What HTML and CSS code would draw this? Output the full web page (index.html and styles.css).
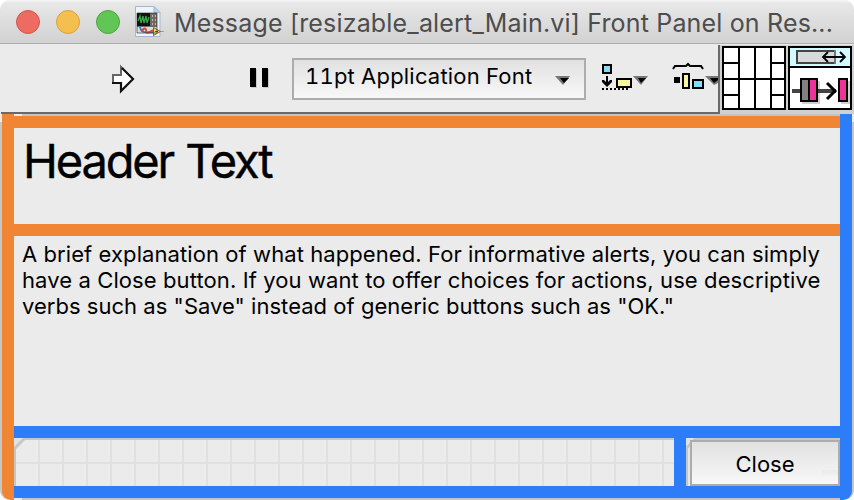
FILE: index.html
```html
<!DOCTYPE html>
<html lang="en">
<head>
<meta charset="utf-8">
<title>Message</title>
<link rel="stylesheet" href="styles.css">
</head>
<body>
<div class="window">
  <header class="titlebar">
    <span class="light red"></span><span class="light yellow"></span><span class="light green"></span>
    <svg class="doc" width="30" height="32" viewBox="0 0 30 32">
      <path d="M.5.5H19l6 6V30.500H.5z" fill="#edf4fc" stroke="#a3b7d0"/>
      <path d="M19 .5v6h6z" fill="#bed4ee" stroke="#a3b7d0"/>
      <path d="M2 7h20v20H2z" fill="#6f6a62"/>
      <path d="M2 7h13v13H2z" fill="#111"/>
      <path d="M3 15l2-5 1 7 2-7 1 7 2-7 1 7 2-6" fill="none" stroke="#37a849" stroke-width="1.300"/>
      <path d="M2 21h20v6H2z" fill="#d8dde2"/>
      <path d="M17 10h1m2 0h1m-4 4h1m2 0h1m-4 4h1m2 0h1" stroke="#ddd6c8" stroke-width="1.500"/>
      <path d="M5 20c0 7 6 7 14 6" fill="none" stroke="#2d7dbb" stroke-width="1.800"/>
      <path d="M7 26c1-5 5-4 4-1s5 1 7-1" fill="none" stroke="#d64735" stroke-width="1.800"/>
      <path d="M24 25.500h5" stroke="#c28f82"/>
      <path d="M18.500 21.500v8l7-4z" fill="#f8d65f" stroke="#81662e"/>
      <path d="M20 25.500h3" stroke="#675020"/>
      <path d="M2 7h20v20H2z" fill="none" stroke="#222" stroke-opacity=".6"/>
    </svg>
    <h1 class="title">Message [resizable_alert_Main.vi] Front Panel on Res...</h1>
  </header>
  <div class="toolbar">
    <svg class="run" width="28" height="32" viewBox="0 0 28 32">
      <path d="M3 12h8V3l12 13-12 13v-9H3z" fill="#fff"/>
      <path d="M3 20v-8h8V4l2 2" fill="none" stroke="#666" stroke-width="2"/>
      <path d="M12 5l11 11-12 12v-8H2" fill="none" stroke="#111" stroke-width="2.200"/>
    </svg>
    <svg class="pause" width="22" height="24" viewBox="0 0 22 24"><path d="M3 3h6v19H3zM15 3h6v19h-6z" fill="#ccc"/><path d="M2 2h6v19H2zM14 2h6v19h-6z"/></svg>
    <div class="font-select"><span>11pt Application Font</span>
      <svg width="16" height="10" viewBox="0 0 16 10"><path d="M0 0h15L8 9z" fill="#777"/><path d="M5 2h9L9 7z" fill="#000"/></svg>
    </div>
    <svg class="align" width="48" height="30" viewBox="0 0 48 30">
      <path d="M3 3h8v8H3z" fill="#82dcf6" stroke="#000" stroke-width="2"/>
      <path d="M17 17h14v8H17z" fill="#f7f5a2" stroke="#000" stroke-width="2"/>
      <path d="M7 14v8" stroke="#000" stroke-width="2"/><path d="M2 18h2l3 3 3-3h2v2l-5 5-5-5z"/>
      <path d="M2 27h28" stroke="#000" stroke-width="2" stroke-dasharray="2 2"/>
      <path d="M33 14h15l-7 9z" fill="#777"/><path d="M38 16h8l-5 5z"/>
    </svg>
    <svg class="distribute" width="46" height="30" viewBox="0 0 46 30">
      <path d="M1 7l2-3h11l2-2 2 2h11l2 3" fill="none" stroke="#000" stroke-width="2"/>
      <path d="M2 15h6v6H2z"/>
      <path d="M11 12h6v14h-6z" fill="#f7f5a2" stroke="#000" stroke-width="2"/>
      <path d="M21 18h10v8H21z" fill="#82dcf6" stroke="#000" stroke-width="2"/>
      <path d="M33 14h13v7l-4 2z" fill="#777"/><path d="M38 16h8v2l-4 3z"/>
    </svg>
    <div class="panes">
      <svg width="64" height="64" viewBox="0 0 64 64">
        <path d="M1 1h62v62H1z" fill="#fff" stroke="#000" stroke-width="2"/>
        <path d="M17 1v62M33 1v62M49 1v62M1 33h62M1 17h16M1 49h16M49 17h14M49 49h14" stroke="#000" stroke-width="2"/>
      </svg>
      <svg width="64" height="64" viewBox="0 0 64 64">
        <path d="M1 1h62v62H1z" fill="#fff"/><path d="M1 1h62v20H1z" fill="#d1fbff"/>
        <path d="M1 1h62v62H1zM1 21h62" fill="none" stroke="#000" stroke-width="2"/>
        <path d="M9 5h38v12H9z" fill="#d9d9d9" stroke="#444" stroke-width="2"/>
        <path d="M47 4v14" stroke="#777" stroke-width="2"/>
        <path d="M35 11h22M40 6l-5 5 5 5M52 6l5 5-5 5" fill="none" stroke="#000" stroke-width="1.800"/>
        <path d="M14 35h18v23H14zM53 35h9v23h-9z" fill="#d0d0d0"/>
        <path d="M4 45h44" stroke="#444" stroke-width="4"/>
        <path d="M39 37l8 8-8 8" fill="none" stroke="#000" stroke-width="3"/>
        <path d="M13 33h8v22h-8z" fill="#808080"/><path d="M21 33h8v22h-8zM51 33h8v22h-8z" fill="#ee3499"/>
        <path d="M13 33h16v22H13zM21 33v22M51 33h8v22h-8z" fill="none" stroke="#000" stroke-width="2"/>
      </svg>
    </div>
  </div>
  <main class="panel">
    <div class="side left"></div>
    <div class="content">
      <div class="edge"></div>
      <div class="bar orange"></div>
      <section class="heading"><h2>Header Text</h2></section>
      <div class="bar orange"></div>
      <section class="message">
        <p class="l1">A brief explanation of what happened. For informative alerts, you can simply</p>
        <p class="l2">have a Close button. If you want to offer choices for actions, use descriptive</p>
        <p class="l3">verbs such as "Save" instead of generic buttons such as "OK."</p>
      </section>
      <div class="bar blue"></div>
      <div class="footer">
        <div class="grid"><svg width="11" height="12" viewBox="0 0 11 12"><path d="M0 0h10L0 10z" fill="#e2e2e2"/><path d="M0 11L11 0" stroke="#c6c6c6" stroke-width="3"/></svg></div>
        <div class="divider"></div>
        <div class="button-pane"><button class="close">Close</button></div>
      </div>
      <div class="bar blue"></div>
      <div class="edge"></div>
    </div>
    <div class="side right"></div>
  </main>
</div>
</body>
</html>
```
FILE: styles.css
```css
* { box-sizing: border-box; }
body { margin: 0; background: #fff; font-family: Inter, "Liberation Sans", sans-serif; color: #000; }
.window { width: 854px; height: 500px; overflow: hidden; background: #ebebeb; border-radius: 10px; display: flex; flex-direction: column; }
h1, h2, p { margin: 0; font-weight: 400; white-space: nowrap; }
.titlebar { height: 44px; flex: none; display: flex; align-items: center; background: linear-gradient(#f5f5f5, #e7e7e7 8%, #d2d2d2); border-bottom: 1px solid #aeaeae; padding-left: 16px; }
.light { width: 24px; height: 24px; border-radius: 50%; margin-right: 16px; border: 1px solid; }
.red { background: #ed6b60; border-color: #d3574d; }
.yellow { background: #f5bf4f; border-color: #d8a03b; }
.green { background: #62c656; border-color: #4aa63c; }
.doc { margin-left: -1px; flex: none; }
.title { font-size: 25px; line-height: 30px; padding-top: 2px; color: #4d4d4d; margin-left: 9px; letter-spacing: .17px; }
.toolbar { height: 70px; flex: none; display: flex; align-items: flex-start; border-bottom: 2px solid #69696b; margin-left: 1px; }
.run { margin: 19px 0 0 109px; }
.pause { margin: 22px 0 0 110px; }
.font-select { width: 294px; height: 42px; margin: 14px 0 0 22px; border: 2px solid #acacac; background: linear-gradient(#e1e1e1, #f8f8f8); display: flex; justify-content: space-between; padding: 2px 13px 0 11px; font-size: 22px; line-height: 28px; letter-spacing: .2px; font-feature-settings: "tnum"; white-space: nowrap; }
.font-select svg { margin-top: 14px; }
.align { margin: 18px 0 0 14px; }
.distribute { margin: 18px 0 0 24px; }
.panes { height: 69px; margin-top: 1px; border-left: 2px solid #69696b; width: 136px; display: flex; gap: 2px; padding: 1px 2px; background: #d0d0d0; }
.panes svg { flex: none; }
.panel { display: flex; height: 386px; padding: 0 2px; background: linear-gradient(#ebebeb 8px, #c6c6c6 8px); }
.side { width: 12px; flex: none; }
.left, .orange { background: #f08533; }
.right, .blue, .divider { background: #2d7df8; }
.left { border-bottom-left-radius: 9px; }
.right { border-bottom-right-radius: 9px; }
.content { width: 826px; display: flex; flex-direction: column; background: #ebebeb; }
.edge { height: 2px; background: linear-gradient(90deg, #ebebeb 8px, #c4c4c4 8px); }
.bar { height: 12px; flex: none; }
.heading { height: 96px; padding: 4px 0 0 9px; }
h2 { font-size: 47px; line-height: 58px; letter-spacing: -2.15px; word-spacing: 1px; -webkit-text-stroke: .4px #000; }
.message { height: 190px; padding: 5px 0 0 8px; font-size: 22px; line-height: 26px; }
.l1 { letter-spacing: .08px; }
.l2 { letter-spacing: .1px; }
.l3 { letter-spacing: .03px; }
.footer { display: flex; height: 48px; }
.grid { width: 660px; border-top: 2px solid #c6c6c6; border-left: 2px solid #c6c6c6; background: repeating-linear-gradient(90deg, transparent 0 22px, #e0e0e0 22px 24px), repeating-linear-gradient(#ebebeb 0 22px, #e0e0e0 22px 24px); }
.grid svg { display: block; margin: -2px 0 0 -2px; }
.divider { width: 12px; }
.button-pane { width: 154px; padding: 2px 0 0 4px; background: linear-gradient(135deg, #e2e2e2 6px, #c6c6c6 6px 9px, transparent 9px), linear-gradient(90deg, #c6c6c6 2px, transparent 2px), linear-gradient(#c6c6c6 2px, #e6e6e6 2px); }
.close { display: block; width: 150px; height: 46px; border: 2px solid #acacac; border-radius: 0; padding: 2px 0 0; background: linear-gradient(#eaeaea, #f2f2f2) right 28px / 16px 6px no-repeat, linear-gradient(#e1e1e1, #f8f8f8); font: 22px/40px Inter, "Liberation Sans", sans-serif; color: #000; }
```
